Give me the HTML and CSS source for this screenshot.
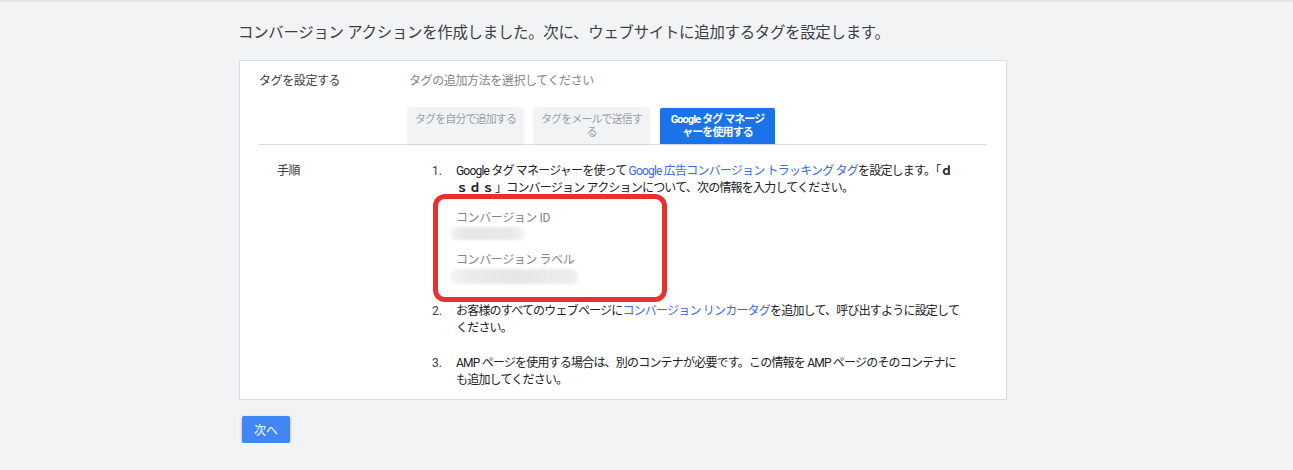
FILE: index.html
```html
<!DOCTYPE html>
<html lang="ja">
<head>
    <meta charset="UTF-8">
    <meta name="viewport" content="width=device-width, initial-scale=1.0">
    <title>コンバージョン アクション</title>
    <link rel="stylesheet" href="styles.css">
</head>
<body>

    <div class="page">
        <h2 class="page-title">コンバージョン アクションを作成しました。次に、ウェブサイトに追加するタグを設定します。</h2>

        <div class="card">
            <!-- Tag setup method -->
            <div class="row row-setup">
                <div class="row-label">タグを設定する</div>
                <div class="row-body">
                    <div class="hint">タグの追加方法を選択してください</div>
                    <div class="tabs">
                        <button class="tab">タグを自分で追加する</button>
                        <button class="tab">タグをメールで送信する</button>
                        <button class="tab active">Google タグ マネージャーを使用する</button>
                    </div>
                </div>
            </div>

            <!-- Steps -->
            <div class="row row-steps">
                <div class="row-label">手順</div>
                <ol class="steps">
                    <li>
                        <span class="num">1.</span>
                        <div class="step-text">
                            Google タグ マネージャーを使って <a href="#">Google 広告コンバージョン トラッキング タグ</a>を設定します。「<b>ｄｓｄｓ</b>」コンバージョン アクションについて、次の情報を入力してください。
                            <div class="fields">
                                <div class="field">
                                    <div class="field-label">コンバージョン ID</div>
                                    <div class="field-value short"></div>
                                </div>
                                <div class="field">
                                    <div class="field-label">コンバージョン ラベル</div>
                                    <div class="field-value long"></div>
                                </div>
                            </div>
                        </div>
                    </li>
                    <li>
                        <span class="num">2.</span>
                        <div class="step-text">
                            お客様のすべてのウェブページに<a href="#">コンバージョン リンカータグ</a>を追加して、呼び出すように設定してください。
                        </div>
                    </li>
                    <li>
                        <span class="num">3.</span>
                        <div class="step-text">
                            AMP ページを使用する場合は、別のコンテナが必要です。この情報を AMP ページのそのコンテナにも追加してください。
                        </div>
                    </li>
                </ol>
            </div>
        </div>

        <button class="next-button">次へ</button>
    </div>

</body>
</html>
```

FILE: styles.css
```css
body {
    margin: 0;
    font-family: Roboto, "Noto Sans CJK JP", sans-serif;
    background-color: #f1f3f4;
    border-top: 2px solid #e4e6e8;
    color: #3c4043;
}

.page {
    width: 768px;
    margin-left: 239px;
    padding-top: 21px;
}

.page-title {
    margin: 0 0 17px -1px;
    font-size: 15.4px;
    font-weight: normal;
    line-height: 20px;
    letter-spacing: -0.25px;
    color: #3c4043;
}

.card {
    background-color: #fff;
    border: 1px solid #dadce0;
    padding: 0 19px;
}

.row {
    display: flex;
    font-size: 12px;
    line-height: 17px;
    letter-spacing: -0.4px;
}

.row-label {
    width: 150px;
    flex-shrink: 0;
    color: #3c4043;
}

.row-setup {
    padding-top: 12px;
    border-bottom: 1px solid #dadce0;
}

.row-body {
    flex: 1;
}

.hint {
    color: #80868b;
    margin-bottom: 18px;
}

.tabs {
    display: flex;
    gap: 11px;
    margin-left: -1px;
}

.tab {
    width: 115px;
    height: 36px;
    padding: 5px 6px 0;
    border: none;
    border-radius: 2px 2px 0 0;
    background-color: #f1f3f4;
    color: #9aa0a6;
    font-family: inherit;
    font-size: 11px;
    line-height: 13px;
    letter-spacing: -0.9px;
    box-shadow: 0 0 2px rgba(0, 0, 0, 0.15);
    display: flex;
    align-items: flex-start;
    justify-content: center;
    text-align: center;
}

.tab.active {
    background-color: #1a73e8;
    color: #fff;
    font-weight: bold;
    padding-left: 9px;
    padding-right: 9px;
}

.row-steps {
    padding: 18px 0 10px 18px;
}

.row-steps .row-label {
    width: 155px;
}

.steps {
    list-style: none;
    margin: 0;
    padding: 0;
    width: 529px;
    letter-spacing: -0.8px;
}

.steps li {
    display: flex;
    margin-bottom: 18px;
}

.steps li:first-child {
    margin-bottom: 1px;
}

.steps li:last-child {
    margin-bottom: 0;
}

.num {
    width: 24px;
    flex-shrink: 0;
    letter-spacing: 0;
}

.step-text {
    flex: 1;
    color: #202124;
}

.step-text a {
    color: #4169d9;
    text-decoration: none;
}

.step-text b {
    letter-spacing: 1px;
}

/* red annotation box around the conversion fields */
.fields {
    margin: -3px 0 0 -23px;
    width: 206px;
    padding: 11px 0 13px 18px;
    border: 5px solid #e8302f;
    border-radius: 12px;
    letter-spacing: -0.4px;
}

.field {
    margin-bottom: 12px;
}

.field:last-child {
    margin-bottom: 0;
}

.field-label {
    color: #80868b;
}

.field-value {
    height: 13px;
    margin: 0 0 0 -6px;
    border-radius: 7px;
    filter: blur(1.5px);
}

.field-value.short {
    width: 76px;
    background: linear-gradient(90deg, #f3f4f5 0, #e6e6e6 20%, #e8e8e8 80%, #f6f7f9 100%);
}

.field-value.long {
    width: 128px;
    height: 15px;
    background: linear-gradient(90deg, #f3f4f5 0, #ebebeb 15%, #e6e6e6 50%, #ececec 85%, #eeeeee 100%);
}

.next-button {
    margin: 16px 0 0 3px;
    width: 48px;
    height: 27px;
    border: none;
    border-radius: 2px;
    background-color: #4285f4;
    color: #fff;
    font-family: inherit;
    font-size: 12px;
    cursor: pointer;
    box-shadow: 0 1px 3px rgba(0, 0, 0, 0.3);
}
```
